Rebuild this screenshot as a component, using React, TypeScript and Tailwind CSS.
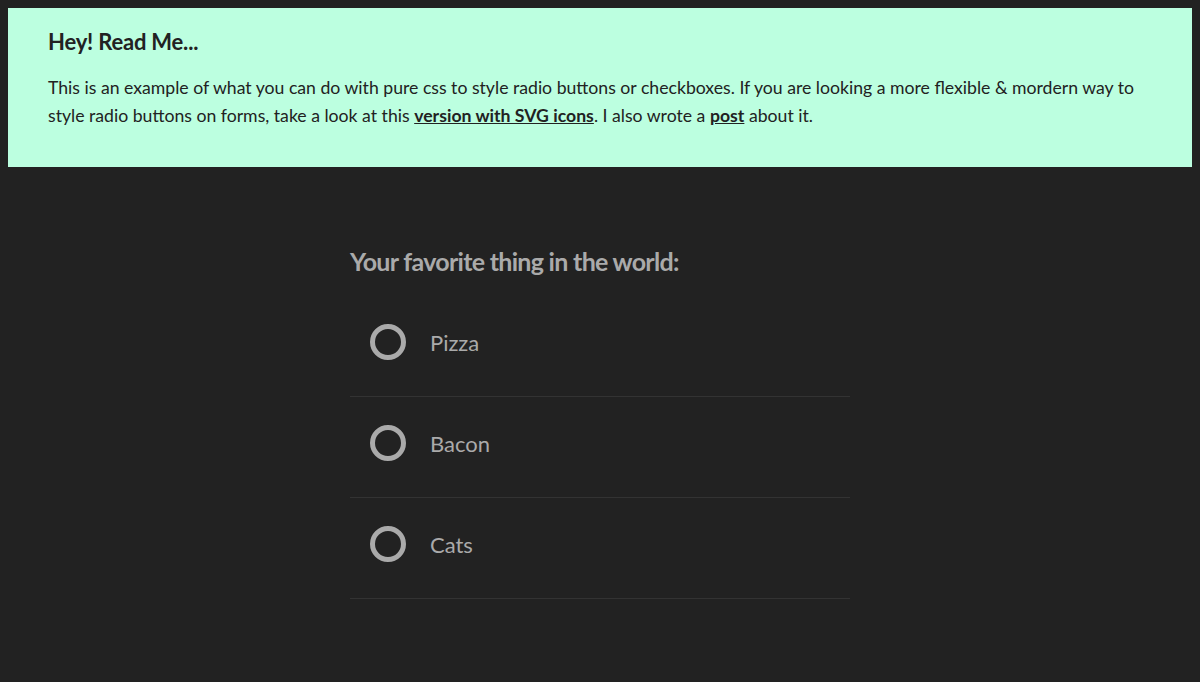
import React from "react";

const items = ["Pizza", "Bacon", "Cats"];

export default function App() {
  return (
    <div
      className="min-h-[682px] bg-[#222222] p-2"
      style={{ fontFamily: "Lato, 'Noto Sans', sans-serif" }}
    >
      <div className="bg-[#bcffe0] px-10 pt-5 pb-[37px] text-[#222222]">
        <h1 className="text-[22px] font-bold leading-[28px] tracking-[-0.2px]">Hey! Read Me...</h1>
        <p className="mt-[18px] text-[17.65px] leading-[28px]">
          This is an example of what you can do with pure css to style radio buttons or checkboxes. If you are looking a more flexible &amp; mordern way to style radio buttons on forms, take a look at this{" "}
          <a className="font-bold underline">version with SVG icons</a>. I also wrote a{" "}
          <a className="font-bold underline">post</a> about it.
        </p>
      </div>
      <div className="mx-auto mt-[78px] w-[500px]">
        <h2 className="text-[25px] font-bold leading-[32px] tracking-[-0.7px] text-[#aaaaaa]">
          Your favorite thing in the world:
        </h2>
        <div className="mt-[19px]">
          {items.map((it) => (
            <div
              key={it}
              className="flex h-[101px] items-center border-b border-[#333333] pl-5 pb-[8px]"
            >
              <span className="box-border h-[36px] w-[36px] rounded-full border-[5px] border-[#aaaaaa]" />
              <span className="ml-[24px] text-[22px] text-[#aaaaaa]">{it}</span>
            </div>
          ))}
        </div>
      </div>
    </div>
  );
}
